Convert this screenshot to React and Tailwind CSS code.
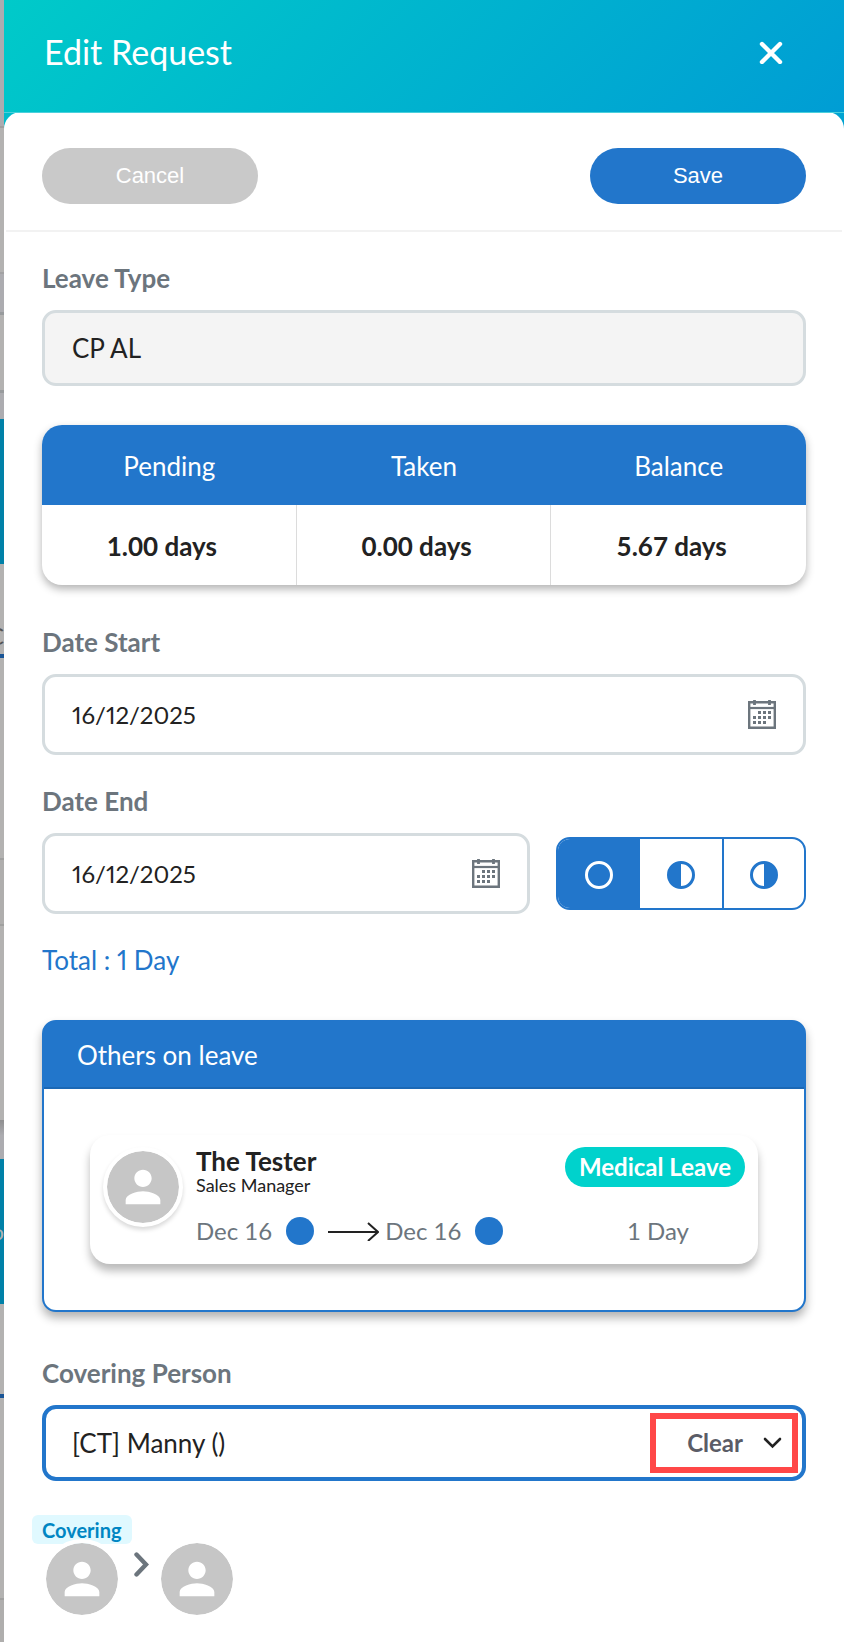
import { useState } from 'react';

const balances = [
  { label: 'Pending', value: '1.00 days' },
  { label: 'Taken', value: '0.00 days' },
  { label: 'Balance', value: '5.67 days' },
];

function CalendarIcon() {
  return (
    <svg width="28" height="29" viewBox="0 0 28 29" fill="none" aria-hidden="true">
      <path d="M1.2 2.3h25.6v25.4H1.2z" stroke="#6c757d" strokeWidth="2.4" />
      <path d="M1 8h26" stroke="#6c757d" strokeWidth="2.2" />
      <path d="M6.5 0v5M21.5 0v5" stroke="#6c757d" strokeWidth="2.8" />
      <path
        d="M10 12.5h3M15 12.5h3M20 12.5h3M5 17.5h3M10 17.5h3M15 17.5h3M20 17.5h3M5 22.5h3M10 22.5h3M15 22.5h3"
        stroke="#6c757d"
        strokeWidth="3"
      />
    </svg>
  );
}

function Avatar({ shadow }) {
  return (
    <div
      className={`size-20 shrink-0 rounded-full border-4 border-white bg-[#c6c6c6] bg-clip-padding flex items-center justify-center ${
        shadow ? 'shadow-[0_3px_4px_rgba(0,0,0,0.15)]' : ''
      }`}
    >
      <svg width="52" height="52" viewBox="0 0 24 24" fill="#fff" aria-hidden="true">
        <path d="M12 12c2.21 0 4-1.79 4-4s-1.79-4-4-4-4 1.79-4 4 1.79 4 4 4zm0 2c-2.67 0-8 1.34-8 4v2h16v-2c0-2.66-5.33-4-8-4z" />
      </svg>
    </div>
  );
}

function DateField({ id, label, value, onChange }) {
  return (
    <div className="min-w-0 flex-1">
      <label htmlFor={id} className="block text-[26px] leading-8 font-bold text-[#6c757d]">{label}</label>
      <div className="mt-4 h-[81px] flex items-center rounded-[14px] border-3 border-[#d5dcdf] px-[27px]">
        <input
          id={id}
          type="text"
          value={value}
          onChange={(e) => onChange(e.target.value)}
          className="min-w-0 flex-1 bg-transparent text-[24px] leading-8 proportional-nums text-[#222] outline-none"
        />
        <button type="button" aria-label={`Pick ${label}`}>
          <CalendarIcon />
        </button>
      </div>
    </div>
  );
}

function DayPart({ value, current, onChange, label, children }) {
  const active = value === current;
  return (
    <label
      className={`relative flex items-center justify-center cursor-pointer pt-0.5 last:border-l-2 last:border-[#2276cb] ${
        active ? 'bg-[#2276cb] text-white' : 'text-[#2276cb]'
      }`}
    >
      <input
        type="radio"
        name="day-part"
        aria-label={label}
        checked={active}
        onChange={() => onChange(value)}
        className="sr-only"
      />
      <svg width="28" height="28" viewBox="0 0 28 28" fill="none" stroke="currentColor" strokeWidth="3" aria-hidden="true">
        <circle cx="14" cy="14" r="12.5" />
        {children}
      </svg>
    </label>
  );
}

// Sliver of the dimmed page that stays visible beside the drawer
function PageBehind() {
  return (
    <div aria-hidden="true" className="w-1 shrink-0 overflow-hidden flex flex-col bg-[#b3b2b1]">
      <div className="h-32 shrink-0 bg-[#acacb0] border-b-2 border-[#9e9e9e]"></div>
      <div className="h-[146px] shrink-0 border-b-2 border-[#a2a2a3]"></div>
      <div className="h-[41px] shrink-0 bg-[#acacb0] border-b-3 border-[#989b9d]"></div>
      <div className="h-[78px] shrink-0 border-b-3 border-[#989b9d]"></div>
      <div className="h-[26px] shrink-0 bg-[#acacb0]"></div>
      <div className="h-[145px] shrink-0 bg-[#0081a8]"></div>
      <div className="h-[94px] shrink-0 flex items-end justify-end border-b-4 border-[#1a5596] pb-1 text-[24px] leading-7 text-[#555]">C</div>
      <div className="h-[202px] shrink-0 border-b-2 border-[#a0a09f]"></div>
      <div className="h-[66px] shrink-0 bg-[#afaead] border-b-2 border-[#a0a09f]"></div>
      <div className="h-[194px] shrink-0"></div>
      <div className="h-[39px] shrink-0 bg-linear-to-b from-[#8f8f90] to-[#acacb0] to-40%"></div>
      <div className="h-[145px] shrink-0 flex items-center justify-end bg-[#0081a8] text-[22px] leading-7 text-[#b3b2b1]">o</div>
      <div className="h-[94px] shrink-0 border-b-4 border-[#1a5596]"></div>
      <div className="h-[202px] shrink-0 border-b-2 border-[#a0a09f]"></div>
      <div className="flex-1 bg-[#afaead]"></div>
    </div>
  );
}

export default function App() {
  const [dateStart, setDateStart] = useState('16/12/2025');
  const [dateEnd, setDateEnd] = useState('16/12/2025');
  const [dayPart, setDayPart] = useState('full');
  const [covering, setCovering] = useState('manny');

  return (
    <div className="min-h-screen flex bg-white font-['Lato',sans-serif] text-[#222]">
      <PageBehind />

      <main className="min-w-0 flex-1">
        <header className="h-28 flex items-center justify-between bg-[linear-gradient(135deg,#00cac9,#009dd4)] pl-10 pr-[61px] pb-2">
          <h1 className="text-[34px] leading-10 text-white">Edit Request</h1>
          <button type="button" aria-label="Close">
            <svg width="24" height="24" viewBox="0 0 24 24" stroke="#fff" strokeWidth="4.4" strokeLinecap="round" aria-hidden="true">
              <path d="M3 4l18 18M21 4L3 22" />
            </svg>
          </button>
        </header>

        <div className="overflow-hidden border-t border-[#4cd0dc] bg-[linear-gradient(90deg,#00bccb,#00a3d1)]">
          <div className="-mt-px rounded-t-[17px] bg-white pt-px">
            <div className="flex items-center justify-between px-[38px] pt-[35px] pb-[26px] font-['Liberation_Sans',sans-serif] text-[22px] text-white">
              <button type="button" className="h-14 w-54 rounded-full bg-[#c9c9c9] pb-0.5">Cancel</button>
              <button type="button" className="h-14 w-54 rounded-full bg-[#2276cb] pb-0.5">Save</button>
            </div>
            <hr className="mx-0.5 border-t-2 border-[#f2f2f2]" />

            <form className="px-[38px] pt-[30px]" onSubmit={(e) => e.preventDefault()}>
              <label htmlFor="leave-type" className="block text-[26px] leading-8 font-bold text-[#6c757d]">Leave Type</label>
              <input
                id="leave-type"
                type="text"
                readOnly
                value="CP AL"
                className="mt-4 block h-[76px] w-full rounded-[14px] border-3 border-[#d5dcdf] bg-[#f4f4f4] px-[27px] text-[26px] leading-8 outline-none"
              />

              <div className="mt-[39px] overflow-hidden rounded-[20px] shadow-[0_4px_8px_rgba(0,0,0,0.3)]">
                <table className="w-full table-fixed border-separate border-spacing-0">
                  <thead>
                    <tr className="bg-[#2276cb] text-white">
                      {balances.map((b) => (
                        <th key={b.label} scope="col" className="h-20 p-0 pt-0.5 text-center text-[26px] leading-8 font-normal">{b.label}</th>
                      ))}
                    </tr>
                  </thead>
                  <tbody>
                    <tr>
                      {balances.map((b) => (
                        <td key={b.label} className="h-20 p-0 pt-0.5 pr-3.5 text-center text-[26px] leading-8 font-bold border-r border-[#dcdcdc] last:border-r-0">{b.value}</td>
                      ))}
                    </tr>
                  </tbody>
                </table>
              </div>

              <div className="mt-[41px] flex">
                <DateField id="date-start" label="Date Start" value={dateStart} onChange={setDateStart} />
              </div>

              <div className="mt-[30px] flex items-end gap-[26px]">
                <DateField id="date-end" label="Date End" value={dateEnd} onChange={setDateEnd} />
                <div role="radiogroup" aria-label="Day part" className="mb-1 h-[73px] w-[250px] grid grid-cols-3 overflow-hidden rounded-[14px] border-2 border-[#2276cb]">
                  <DayPart value="full" current={dayPart} onChange={setDayPart} label="Full day" />
                  <DayPart value="am" current={dayPart} onChange={setDayPart} label="First half">
                    <path d="M14 1.5a12.5 12.5 0 0 0 0 25z" fill="currentColor" stroke="none" />
                  </DayPart>
                  <DayPart value="pm" current={dayPart} onChange={setDayPart} label="Second half">
                    <path d="M14 1.5a12.5 12.5 0 0 1 0 25z" fill="currentColor" stroke="none" />
                  </DayPart>
                </div>
              </div>

              <p className="mt-[30px] text-[26px] leading-8 proportional-nums text-[#2276cb]">Total : 1 Day</p>

              <section className="mt-11 rounded-[14px] border-2 border-[#2276cb] bg-[#2276cb] shadow-[0_6px_10px_rgba(0,0,0,0.3)]">
                <h2 className="h-[67px] flex items-center border-b-2 border-[#1b68b5] px-[33px] text-[26px] leading-8 text-white">Others on leave</h2>
                <div className="rounded-b-[12px] bg-white p-[46px]">
                  <div className="h-[129px] flex gap-[13px] rounded-[20px] px-[13px] pt-3 shadow-[0_7px_8px_rgba(0,0,0,0.27)]">
                    <Avatar shadow />
                    <div className="min-w-0 flex-1">
                      <div className="flex justify-between">
                        <div>
                          <h3 className="text-[26px] leading-7 font-bold">The Tester</h3>
                          <p className="text-[18px] leading-5">Sales Manager</p>
                        </div>
                        <span className="h-10 flex items-center rounded-full bg-[#00d2cc] px-3.5 text-[24px] leading-8 font-bold text-white">Medical Leave</span>
                      </div>
                      <div className="mt-5 flex items-center text-[24px] leading-8 text-[#6c757d]">
                        <span>Dec 16</span>
                        <span className="ml-3.5 size-7 rounded-full bg-[#2276cb]"></span>
                        <svg className="ml-3.5 mr-1.5" width="51" height="20" viewBox="0 0 51 20" fill="none" stroke="#222" strokeWidth="2" aria-hidden="true">
                          <path d="M0 11h50M40 2l10 9-10 9" />
                        </svg>
                        <span>Dec 16</span>
                        <span className="ml-3.5 size-7 rounded-full bg-[#2276cb]"></span>
                        <span className="ml-auto pr-14">1 Day</span>
                      </div>
                    </div>
                  </div>
                </div>
              </section>

              <label htmlFor="covering-person" className="mt-[45px] block text-[26px] leading-8 font-bold text-[#6c757d]">Covering Person</label>
              <div className="mt-4 h-[76px] flex items-center rounded-[14px] border-4 border-[#2276cb] pl-[26px] pr-1">
                <select
                  id="covering-person"
                  value={covering}
                  onChange={(e) => setCovering(e.target.value)}
                  className="min-w-0 flex-1 appearance-none bg-transparent text-[26px] leading-8 outline-none"
                >
                  <option value="manny">[CT] Manny ()</option>
                  <option value=""></option>
                </select>
                <div className="h-15 w-37 flex items-center justify-end gap-5 border-6 border-[#ff4747] pr-2.5">
                  <button type="button" onClick={() => setCovering('')} className="text-[24px] leading-8 font-bold text-[#5b5c66]">Clear</button>
                  <svg width="19" height="12" viewBox="0 0 19 12" fill="none" stroke="#222" strokeWidth="2.6" strokeLinecap="round" aria-hidden="true">
                    <path d="M2 2l7.5 7.5L17 2" />
                  </svg>
                </div>
              </div>

              <div className="mt-[34px] -ml-2.5 flex flex-col items-start">
                <span className="h-[29px] flex items-center rounded-md bg-[#e0f9ff] px-2.5 text-[20px] leading-6 font-bold text-[#0086c3]">Covering</span>
                <div className="-mt-[5px] ml-2.5 flex items-center">
                  <Avatar />
                  <svg className="ml-3 mr-2 mb-[30px]" width="15" height="25" viewBox="0 0 15 25" fill="none" stroke="#6c757d" strokeWidth="4.4" strokeLinecap="round" aria-hidden="true">
                    <path d="M2.5 2.5l9.5 10-9.5 10" />
                  </svg>
                  <Avatar />
                </div>
              </div>
            </form>
          </div>
        </div>
      </main>
    </div>
  );
}
